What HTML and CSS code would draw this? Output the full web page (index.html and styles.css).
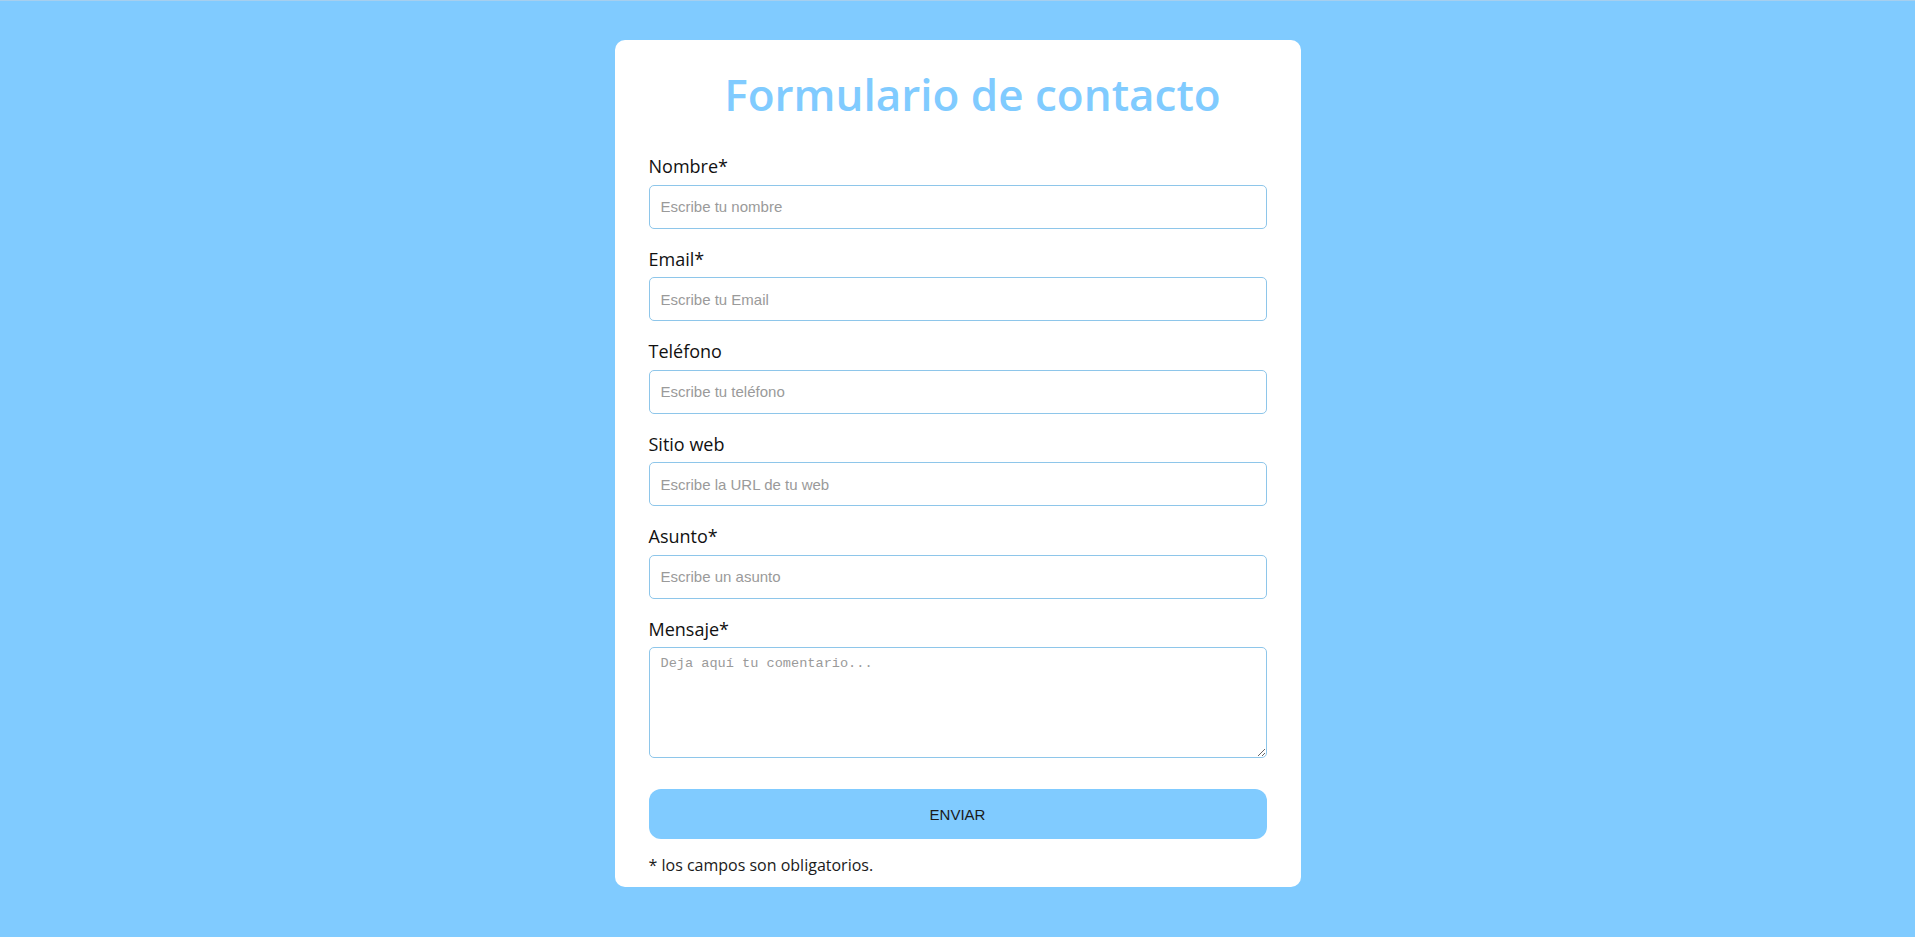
FILE: index.html
```html
<!DOCTYPE html>
<html lang="es">
<head>
<meta charset="utf-8">
<title>Formulario de contacto</title>
<link rel="stylesheet" href="styles.css">
</head>
<body>
<main class="card">
  <h1 class="title">Formulario de contacto</h1>
  <form class="form">
    <div class="field">
      <label class="label" for="nombre">Nombre*</label>
      <input class="input" id="nombre" type="text" placeholder="Escribe tu nombre">
    </div>
    <div class="field">
      <label class="label" for="email">Email*</label>
      <input class="input" id="email" type="email" placeholder="Escribe tu Email">
    </div>
    <div class="field">
      <label class="label" for="telefono">Teléfono</label>
      <input class="input" id="telefono" type="tel" placeholder="Escribe tu teléfono">
    </div>
    <div class="field">
      <label class="label" for="web">Sitio web</label>
      <input class="input" id="web" type="url" placeholder="Escribe la URL de tu web">
    </div>
    <div class="field">
      <label class="label" for="asunto">Asunto*</label>
      <input class="input" id="asunto" type="text" placeholder="Escribe un asunto">
    </div>
    <div class="field">
      <label class="label" for="mensaje">Mensaje*</label>
      <textarea class="textarea" id="mensaje" placeholder="Deja aquí tu comentario..."></textarea>
    </div>
    <button class="button" type="button">ENVIAR</button>
    <p class="note">* los campos son obligatorios.</p>
  </form>
</main>
</body>
</html>
```

FILE: styles.css
```css
html {
  background: #80cbff;
}

body {
  margin: 0;
  min-height: 937px;
  background: #80cbff;
  border-top: 1px solid #a6cfee;
  box-sizing: border-box;
  font-family: "Open Sans", "Noto Sans", sans-serif;
}

.card {
  width: 686px;
  box-sizing: border-box;
  margin: 39px auto 0;
  background: #ffffff;
  border-radius: 10px;
  padding: 26px 34px 11px;
}

.title {
  margin: 0 0 31px;
  padding-left: 30px;
  text-align: center;
  font-size: 44px;
  font-weight: 600;
  line-height: 57px;
  color: #80cbff;
}

.form {
  display: flex;
  flex-direction: column;
}

.field {
  display: flex;
  flex-direction: column;
  margin-bottom: 18px;
}

.label {
  font-size: 18px;
  line-height: 24.5px;
  color: #111111;
  margin-bottom: 6px;
}

.input,
.textarea {
  box-sizing: border-box;
  width: 100%;
  border: 1px solid #8ec6ea;
  border-radius: 5px;
  background: #ffffff;
  margin: 0;
}

.input {
  height: 44px;
  padding: 0 11px;
  font-family: "Liberation Sans", Arial, sans-serif;
  font-size: 15px;
  color: #333333;
}

.textarea {
  height: 111px;
  padding: 8px 11px;
  font-family: "Liberation Mono", monospace;
  font-size: 13.6px;
  resize: vertical;
}

.input::placeholder,
.textarea::placeholder {
  color: #9a9a9a;
}

.button {
  margin-top: 13px;
  height: 50px;
  border: none;
  border-radius: 12px;
  background: #80cbff;
  font-family: "Liberation Sans", Arial, sans-serif;
  font-size: 15px;
  color: #1a1a1a;
}

.note {
  margin: 15px 0 0;
  font-size: 16px;
  line-height: 22px;
  color: #1a1a1a;
}
```
